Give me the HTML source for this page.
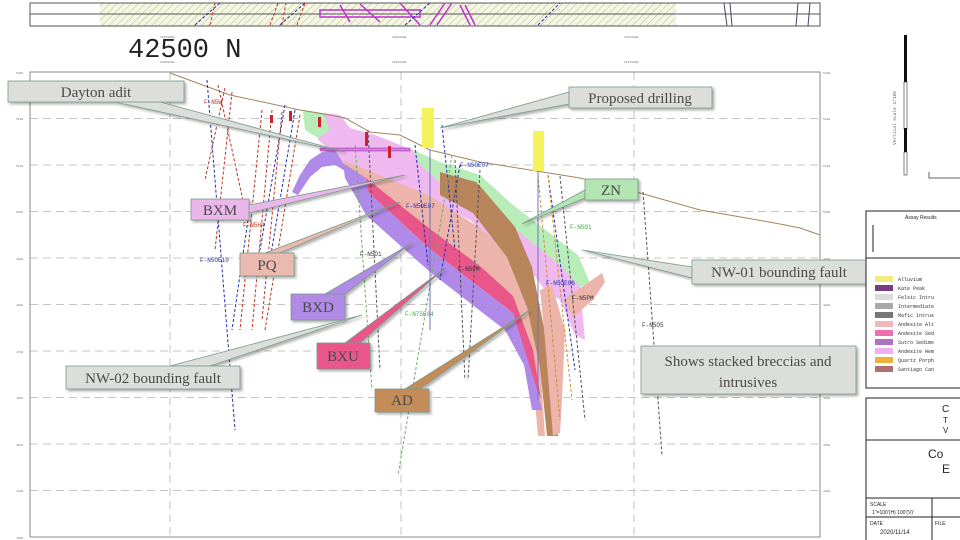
<!DOCTYPE html>
<html><head><meta charset="utf-8"><style>
html,body{margin:0;padding:0;background:#fff;width:960px;height:540px;overflow:hidden}
svg{display:block}
.lbl{font-family:"Liberation Serif",serif;font-size:15px;fill:#4a4a4a}
.mono{font-family:"Liberation Mono",monospace}
</style></head><body>
<svg width="960" height="540" viewBox="0 0 960 540" xmlns="http://www.w3.org/2000/svg">
<defs>
<pattern id="h" width="5" height="5" patternUnits="userSpaceOnUse" patternTransform="rotate(45)">
<rect width="5" height="5" fill="#f4f6e6"/><line x1="0" y1="0" x2="0" y2="5" stroke="#b9c27a" stroke-width="1"/></pattern>
<filter id="sh" x="-10%" y="-10%" width="130%" height="140%"><feDropShadow dx="2" dy="2" stdDeviation="1.2" flood-color="#000" flood-opacity="0.3"/></filter>
</defs>
<!-- top strip -->
<rect x="100" y="3" width="576" height="23" fill="url(#h)"/>
<rect x="30" y="3" width="790" height="23" fill="none" stroke="#555" stroke-width="1"/>
<line x1="30" y1="14" x2="820" y2="14" stroke="#555"/>
<g stroke="#c030d0" stroke-width="1.5" fill="none"><path d="M320 10 L420 10 L420 17 L320 17Z M340 5 L350 22 M360 4 L380 22 M400 3 L420 25 M430 25 L445 3 M437 25 L452 3 M460 5 L470 25 M465 5 L475 25"/></g>
<g stroke="#2030a0" stroke-width="1" stroke-dasharray="3 2" fill="none"><path d="M195 25 L220 3 M280 25 L305 3 M405 25 L430 3 M538 25 L560 3"/></g>
<g stroke="#c03020" stroke-width="1" stroke-dasharray="3 2" fill="none"><path d="M210 25 L215 3 M270 25 L278 3 M282 25 L286 3 M297 25 L305 3"/></g>
<g stroke="#446" stroke-width="1" fill="none"><path d="M724 3 L727 26 M730 3 L732 26 M798 3 L796 26 M810 3 L808 26"/></g>
<text x="128" y="57" class="mono" font-size="27" fill="#222">42500 N</text>
<g class="mono" font-size="3" fill="#777"><text x="160" y="38">2026000E</text><text x="392" y="38">2026500E</text><text x="624" y="38">2027000E</text><text x="160" y="63">2026000E</text><text x="392" y="63">2026500E</text><text x="624" y="63">2027000E</text></g>
<!-- grid -->
<g stroke="#c4c4c4" stroke-width="1" stroke-dasharray="8 5" fill="none">
<path d="M30 72H820M30 118.5H820M30 165H820M30 211.5H820M30 258H820M30 304.5H820M30 351H820M30 397.5H820M30 444H820M30 490.5H820M30 537H820"/>
<path d="M170 72V537M401 72V537M634 72V537"/></g>
<rect x="30" y="72" width="790" height="465" fill="none" stroke="#888" stroke-width="1"/>
<g class="mono" font-size="3" fill="#777"><text x="16" y="74">5300</text><text x="16" y="120">5200</text><text x="16" y="167">5100</text><text x="16" y="213">5000</text><text x="16" y="260">4900</text><text x="16" y="306">4800</text><text x="16" y="353">4700</text><text x="16" y="399">4600</text><text x="16" y="446">4500</text><text x="16" y="492">4400</text><text x="16" y="539">4300</text>
<text x="823" y="74">5300</text><text x="823" y="120">5200</text><text x="823" y="167">5100</text><text x="823" y="213">5000</text><text x="823" y="260">4900</text><text x="823" y="306">4800</text><text x="823" y="353">4700</text><text x="823" y="399">4600</text><text x="823" y="446">4500</text><text x="823" y="492">4400</text></g>
<!-- geology -->
<path d="M323 113 L340 115 L350 128 L375 135 L413 150 L440 175 L520 225 L578 262 L585 340 L575 335 L560 300 L545 290 L530 270 L513 260 L470 220 L430 200 L343 163 L330 150 L318 140 L320 120Z" fill="#efb9ef"/>
<path d="M303 110 L323 113 L330 130 L318 138 L305 130Z" fill="#b8ecb8"/>
<path d="M413 150 L440 162 L480 175 L513 205 L578 255 L590 283 L580 287 L560 265 L513 227 L440 182 L420 165Z" fill="#b8ecb8"/>
<path d="M343 160 L430 196 L480 228 L510 253 L527 290 L540 360 L545 436 L538 436 L533 380 L513 313 L470 277 L430 247 L368 192 L347 172Z" fill="#ecb4aa"/>
<path d="M440 172 L476 182 L480 186 L515 227 L532 267 L545 333 L555 400 L558 436 L547 436 L540 367 L527 307 L507 257 L473 213 L440 195Z" fill="#b8845a"/>
<path d="M366 178 L430 229 L480 266 L513 296 L533 350 L541 400 L537 390 L513 313 L470 280 L430 249 L368 192Z" fill="#e9578a"/>
<path d="M343 163 L366 178 L368 192 L430 249 L470 280 L513 313 L537 390 L542 410 L532 410 L524 365 L505 330 L470 303 L430 272 L366 215 L345 178Z" fill="#b08ae8"/>
<path d="M292 192 L300 175 L310 160 L322 152 L335 150 L343 163 L347 172 L335 165 L322 167 L310 177 L298 195Z" fill="#b08ae8"/>
<path d="M540 290 L552 285 L565 330 L562 400 L560 433 L553 436 L550 400 L545 340Z" fill="#ecb4aa"/>
<path d="M563 300 L602 273 L605 282 L593 300 L573 317Z" fill="#ecb4aa"/>
<!-- topo -->
<path d="M170 73 L230 95 L300 110 L330 115 L345 118 L370 132 L400 135 L430 150 L480 162 L530 170 L580 178 L640 193 L700 210 L735 216 L780 224 L800 228 L820 235" fill="none" stroke="#a0875e" stroke-width="1"/>
<!-- drill holes -->
<g fill="none" stroke-width="1" stroke-dasharray="3 2">
<g stroke="#2030b0"><path d="M207 80 L235 430 M248 220 L232 330 M285 105 L260 250 M295 110 L270 260 M415 145 L428 265 M460 165 L440 280 M548 175 L575 370 M442 125 L455 250"/></g>
<g stroke="#c03020"><path d="M218 85 L245 210 M225 88 L205 180 M232 92 L215 250 M262 110 L240 330 M272 110 L252 330 M282 112 L262 320 M300 115 L265 330"/></g>
<g stroke="#6ab060"><path d="M452 155 L398 475 M355 145 L372 390"/></g>
<g stroke="#555"><path d="M368 130 L380 370 M643 192 L662 455 M455 160 L465 380 M480 170 L468 380 M560 176 L585 420"/></g>
<g stroke="#d09030"><path d="M538 175 L560 420 M548 175 L572 400"/></g>
</g>
<g stroke="#7070c0" stroke-width="1"><line x1="538" y1="170" x2="538" y2="400"/><line x1="430" y1="150" x2="430" y2="330"/></g>
<rect x="422" y="108" width="12" height="40" fill="#f6f25a"/>
<rect x="533" y="131" width="11" height="40" fill="#f6f25a"/>
<rect x="320" y="148" width="90" height="3" fill="#d878e0" stroke="#9030a0" stroke-width="0.5"/>
<g fill="#d02030"><rect x="270" y="115" width="3" height="8"/><rect x="289" y="111" width="3" height="10"/><rect x="365" y="132" width="3" height="14"/><rect x="388" y="146" width="3" height="12"/><rect x="318" y="117" width="3" height="10"/></g>
<g class="mono" font-size="6"><text x="204" y="104" fill="#c03020">F-N5W</text><text x="200" y="262" fill="#2030b0">F-N5OE10</text><text x="243" y="227" fill="#c03020">F-N5H4</text><text x="406" y="208" fill="#2030b0">F-N5OE07</text><text x="460" y="167" fill="#2030b0">F-N5OE07</text><text x="360" y="256" fill="#333">F-N5O1</text><text x="458" y="271" fill="#333">F-N5PM</text><text x="546" y="285" fill="#2030b0">F-N5OE06</text><text x="570" y="229" fill="#4a4">F-N5O1</text><text x="642" y="327" fill="#333">F-N5O5</text><text x="405" y="316" fill="#4a4">F-N75E04</text><text x="572" y="300" fill="#333">F-N5PM</text></g>
<!-- callouts -->
<g filter="url(#sh)" stroke="#7a9a8a" stroke-width="0.8">
<path d="M115 102 L345 152 L160 102Z" fill="#dcdedc"/>
<rect x="8" y="81" width="176" height="21" fill="#dcdedc"/>
<path d="M569 92 L440 128 L569 104Z" fill="#dcdedc"/>
<rect x="569" y="87" width="143" height="21" fill="#dcdedc"/>
<path d="M249 205 L405 175 L249 213Z" fill="#e9b7e9"/>
<rect x="191" y="199" width="58" height="21" fill="#e9b7e9"/>
<path d="M265 253 L400 202 L280 253Z" fill="#eab9b0"/>
<rect x="240" y="253" width="54" height="23" fill="#eab9b0"/>
<path d="M325 294 L412 243 L345 294Z" fill="#b08ae6"/>
<rect x="291" y="294" width="54" height="26" fill="#b08ae6"/>
<path d="M345 343 L445 268 L360 343Z" fill="#e8578a"/>
<rect x="317" y="343" width="53" height="26" fill="#e8578a"/>
<path d="M405 389 L530 310 L420 389Z" fill="#c48c58"/>
<rect x="375" y="389" width="54" height="23" fill="#c48c58"/>
<path d="M585 190 L522 224 L585 198Z" fill="#b2e5b2"/>
<rect x="585" y="179" width="53" height="21" fill="#b2e5b2"/>
<path d="M692 267 L582 250 L692 278Z" fill="#dcdedc"/>
<rect x="692" y="260" width="174" height="24" fill="#dcdedc"/>
<path d="M170 366 L362 315 L210 366Z" fill="#dcdedc"/>
<rect x="66" y="366" width="174" height="23" fill="#dcdedc"/>
<rect x="641" y="346" width="215" height="48" fill="#dcdedc"/>
</g>
<g class="lbl" text-anchor="middle">
<text x="96" y="97">Dayton  adit</text><text x="640" y="103">Proposed drilling</text>
<text x="220" y="215">BXM</text><text x="267" y="270">PQ</text><text x="318" y="312">BXD</text><text x="343" y="361">BXU</text><text x="402" y="405">AD</text><text x="611" y="195">ZN</text>
<text x="779" y="277">NW-01 bounding  fault</text><text x="153" y="383">NW-02 bounding  fault</text>
<text x="748" y="366">Shows stacked breccias  and</text><text x="748" y="387">intrusives</text></g>
<!-- right side -->
<rect x="904" y="35" width="3" height="47" fill="#111"/><rect x="904" y="82" width="3" height="47" fill="#fff" stroke="#333" stroke-width="0.6"/><rect x="904" y="128" width="3" height="24" fill="#111"/><rect x="904" y="152" width="3" height="23" fill="#fff" stroke="#333" stroke-width="0.6"/>
<text x="896" y="145" class="mono" font-size="4.5" fill="#666" transform="rotate(-90 896 145)">Vertical Scale 1/100</text>
<path d="M929 172 V178 H960" stroke="#666" fill="none"/>
<rect x="866" y="211" width="100" height="47" fill="#fff" stroke="#222"/>
<text x="905" y="219" font-family="Liberation Sans,sans-serif" font-size="5" fill="#222">Assay Results</text>
<path d="M873 225 V252" stroke="#222"/>
<rect x="866" y="258" width="100" height="130" fill="#fff" stroke="#222"/>
<g class="mono" font-size="5" fill="#333">
<rect x="875" y="276" width="18" height="6" fill="#f0ec80"/><text x="898" y="281">Alluvium</text>
<rect x="875" y="285" width="18" height="6" fill="#7a3c80"/><text x="898" y="290">Kate Peak</text>
<rect x="875" y="294" width="18" height="6" fill="#dcdcdc"/><text x="898" y="299">Felsic Intru</text>
<rect x="875" y="303" width="18" height="6" fill="#aaa"/><text x="898" y="308">Intermediate</text>
<rect x="875" y="312" width="18" height="6" fill="#777"/><text x="898" y="317">Mafic Intrus</text>
<rect x="875" y="321" width="18" height="6" fill="#f0b8b8"/><text x="898" y="326">Andesite Alt</text>
<rect x="875" y="330" width="18" height="6" fill="#ee6fb0"/><text x="898" y="335">Andesite Sed</text>
<rect x="875" y="339" width="18" height="6" fill="#b070c0"/><text x="898" y="344">Sutro Sedime</text>
<rect x="875" y="348" width="18" height="6" fill="#f0b0f0"/><text x="898" y="353">Andesite Hem</text>
<rect x="875" y="357" width="18" height="6" fill="#f0b040"/><text x="898" y="362">Quartz Porph</text>
<rect x="875" y="366" width="18" height="6" fill="#b07070"/><text x="898" y="371">Santiago Can</text></g>
<rect x="866" y="398" width="100" height="150" fill="#fff" stroke="#222"/>
<line x1="866" y1="440" x2="960" y2="440" stroke="#222"/>
<line x1="866" y1="498" x2="960" y2="498" stroke="#222"/><line x1="866" y1="517" x2="960" y2="517" stroke="#222"/>
<line x1="932" y1="498" x2="932" y2="540" stroke="#222"/>
<g font-family="Liberation Sans,sans-serif" fill="#222"><text x="942" y="412" font-size="10">C</text><text x="943" y="423" font-size="8">T</text><text x="943" y="433" font-size="8">V</text>
<text x="928" y="458" font-size="12">Co</text><text x="942" y="473" font-size="12">E</text>
<text x="870" y="506" font-size="5">SCALE</text><text x="872" y="514" font-size="5">1"=100'(H) 100'(V)'</text><text x="870" y="525" font-size="5">DATE</text><text x="880" y="534" font-size="6">2020/11/14</text><text x="935" y="525" font-size="5">FILE</text></g>
</svg>
</body></html>
